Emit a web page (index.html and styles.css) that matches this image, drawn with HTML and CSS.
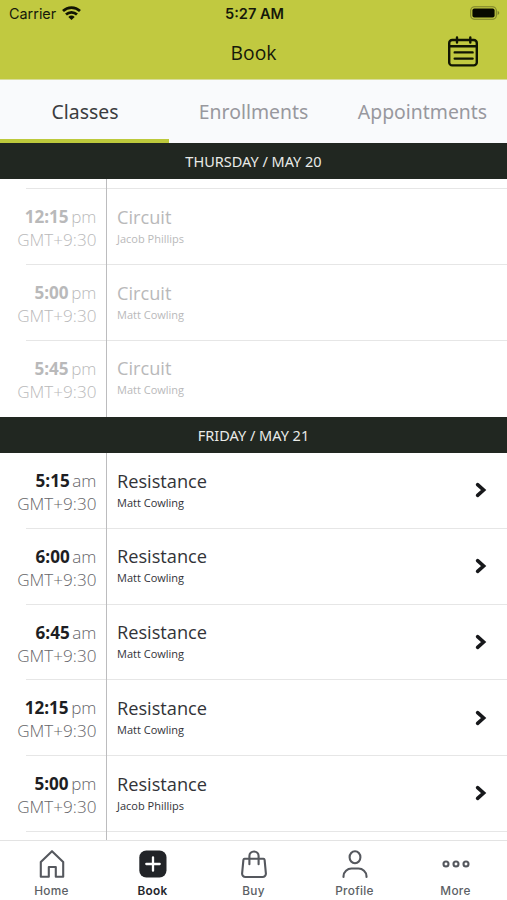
FILE: index.html
```html
<!DOCTYPE html>
<html lang="en">
<head>
<meta charset="utf-8">
<title>Book</title>
<link rel="stylesheet" href="styles.css">
</head>
<body>
<div class="app">
  <header class="top">
    <div class="status">
      <div class="carrier"><span>Carrier</span>
        <svg class="wifi" width="19" height="14" viewBox="0 0 19 14"><g fill="none" stroke="#111503" stroke-width="2.7"><path d="M1 5a12.3 12.3 0 0 1 17 0"/><path d="M4 8.6a8 8 0 0 1 11 0"/></g><path d="M6.3 11a4.7 4.7 0 0 1 6.4 0L9.5 14z" fill="#111503"/></svg>
      </div>
      <span class="clock">5:27 AM</span>
      <svg class="battery" width="30" height="14" viewBox="0 0 30 14"><rect x=".7" y=".7" width="25.6" height="12.6" rx="3.8" fill="none" stroke="#7b812a" stroke-width="1.1"/><rect x="2.4" y="2.4" width="22.2" height="9.2" rx="2" fill="#080a00"/><path d="M27.6 4.8q3.4 2.2 0 4.4z" fill="#7b812a"/></svg>
    </div>
    <div class="titlebar">
      <h1>Book</h1>
      <svg class="calendar" width="30" height="31" viewBox="0 0 30 31" fill="none" stroke="#111503" stroke-width="2.4" stroke-linecap="round"><rect x="1.2" y="4" width="27.6" height="25.4" rx="3"/><path d="M1.2 10.3h27.6M9 1.5v5M22.3 1.5v5"/><path d="M6.7 16.4h17.9M6.7 22.6h17.9"/></svg>
    </div>
  </header>
  <nav class="tabs">
    <a class="tab active">Classes</a>
    <a class="tab">Enrollments</a>
    <a class="tab">Appointments</a>
  </nav>
  <main class="schedule">
    <h2 class="day">THURSDAY / MAY 20</h2>
    <section class="rows past">
      <div class="row sliver"><div class="time"></div><div class="info"></div></div>
      <div class="row"><div class="time"><p><b>12:15</b><i>pm</i></p><p class="zone">GMT+9:30</p></div><div class="info"><h3>Circuit</h3><p>Jacob Phillips</p></div></div>
      <div class="row"><div class="time"><p><b>5:00</b><i>pm</i></p><p class="zone">GMT+9:30</p></div><div class="info"><h3>Circuit</h3><p>Matt Cowling</p></div></div>
      <div class="row"><div class="time"><p><b>5:45</b><i>pm</i></p><p class="zone">GMT+9:30</p></div><div class="info"><h3>Circuit</h3><p>Matt Cowling</p></div></div>
    </section>
    <h2 class="day">FRIDAY / MAY 21</h2>
    <section class="rows">
      <div class="row"><div class="time"><p><b>5:15</b><i>am</i></p><p class="zone">GMT+9:30</p></div><div class="info"><h3>Resistance</h3><p>Matt Cowling</p></div><svg class="chev" width="12" height="16" viewBox="0 0 12 16"><path d="M2.6 2.6L8.6 8l-6 5.4"/></svg></div>
      <div class="row"><div class="time"><p><b>6:00</b><i>am</i></p><p class="zone">GMT+9:30</p></div><div class="info"><h3>Resistance</h3><p>Matt Cowling</p></div><svg class="chev" width="12" height="16" viewBox="0 0 12 16"><path d="M2.6 2.6L8.6 8l-6 5.4"/></svg></div>
      <div class="row"><div class="time"><p><b>6:45</b><i>am</i></p><p class="zone">GMT+9:30</p></div><div class="info"><h3>Resistance</h3><p>Matt Cowling</p></div><svg class="chev" width="12" height="16" viewBox="0 0 12 16"><path d="M2.6 2.6L8.6 8l-6 5.4"/></svg></div>
      <div class="row"><div class="time"><p><b>12:15</b><i>pm</i></p><p class="zone">GMT+9:30</p></div><div class="info"><h3>Resistance</h3><p>Matt Cowling</p></div><svg class="chev" width="12" height="16" viewBox="0 0 12 16"><path d="M2.6 2.6L8.6 8l-6 5.4"/></svg></div>
      <div class="row"><div class="time"><p><b>5:00</b><i>pm</i></p><p class="zone">GMT+9:30</p></div><div class="info"><h3>Resistance</h3><p>Jacob Phillips</p></div><svg class="chev" width="12" height="16" viewBox="0 0 12 16"><path d="M2.6 2.6L8.6 8l-6 5.4"/></svg></div>
      <div class="row sliver"><div class="time"></div><div class="info"></div></div>
    </section>
  </main>
  <footer class="bottom">
    <a class="item"><svg width="30" height="30" viewBox="0 0 30 30"><path d="M3.8 13L15 2.2l11.2 10.8v14.8h-7.4v-9.8h-7v9.8h-8z"/></svg><span>Home</span></a>
    <a class="item on"><svg width="30" height="30" viewBox="0 0 30 30"><rect class="solid" x="1.3" y="1.5" width="27.2" height="27" rx="7"/><path class="plus" d="M15 8.3v13.4M8.3 15h13.4"/></svg><span>Book</span></a>
    <a class="item"><svg width="30" height="30" viewBox="0 0 30 30"><path d="M5.6 9.8h18.8a1.2 1.2 0 0 1 1.2 1l1.3 13.8a3.3 3.3 0 0 1-3.3 3.4H6.4a3.3 3.3 0 0 1-3.3-3.4l1.3-13.8a1.2 1.2 0 0 1 1.2-1z"/><path d="M10.4 15.3V7.1a4.6 4.6 0 0 1 9.2 0v8.2"/></svg><span>Buy</span></a>
    <a class="item"><svg width="30" height="30" viewBox="0 0 30 30"><ellipse cx="15" cy="8.3" rx="5.4" ry="6"/><path d="M3.5 28v-.8c0-4.5 4-7.7 8-7.7h7c4 0 8 3.2 8 7.7v.8"/></svg><span>Profile</span></a>
    <a class="item"><svg width="30" height="30" viewBox="0 0 30 30"><circle cx="5" cy="15" r="2.5"/><circle cx="15" cy="15" r="2.5"/><circle cx="25" cy="15" r="2.5"/></svg><span>More</span></a>
  </footer>
</div>
</body>
</html>
```
FILE: styles.css
```css
* { box-sizing: border-box; margin: 0; padding: 0; }
body { width: 507px; height: 900px; overflow: hidden; background: #fff; font-family: "Open Sans", "Noto Sans", sans-serif; color: #323338; }
.app { height: 900px; display: flex; flex-direction: column; }
.top { height: 79px; background: #c1c940; flex: none; color: #16190a; }
.status { height: 28px; display: grid; grid-template-columns: 1fr auto 1fr; align-items: center; padding: 0 7px 0 9px; font: 14.4px/28px Inter, sans-serif; }
.carrier { display: flex; align-items: center; gap: 6px; }
.wifi { margin-top: -2px; }
.clock { font-weight: 600; font-size: 14.6px; }
.battery { justify-self: end; margin-top: -2px; }
.titlebar { height: 51px; display: grid; grid-template-columns: 1fr auto 1fr; align-items: center; padding: 0 29px; }
h1 { grid-column: 2; font-size: 19.3px; line-height: 50px; height: 51px; font-weight: 400; }
.calendar { justify-self: end; margin-top: -4px; }
.tabs { height: 63.5px; flex: none; display: grid; grid-template-columns: repeat(3, 1fr); background: #f9fafc; border-top: 1px solid #d9dd9c; }
.tab { font: 19.4px/63px "Noto Sans", sans-serif; text-align: center; color: #98989e; border-bottom: 4px solid transparent; height: 62.5px; }
.tab.active { color: #3b3c40; border-color: #bdc93c; padding-left: 1px; }
.schedule { flex: 1; min-height: 0; overflow: hidden; }
.day { height: 36.5px; background: #212721; color: #e9ebe8; font: 400 14.5px/36px "Noto Sans", sans-serif; text-align: center; }
.rows { background: #fff; }
.row { height: 75.75px; display: flex; align-items: flex-start; background: linear-gradient(#bcbcbe, #bcbcbe) 106px 0 / 1px 100% no-repeat, linear-gradient(#e6e6e6, #e6e6e6) 26px 100% / 481px 1px no-repeat; }
.row.sliver { height: 10px; }
.past .row.sliver { height: 10.4px; }
.past .row:last-child { background: linear-gradient(#bcbcbe, #bcbcbe) 106px 0 / 1px 100% no-repeat; }
.time { width: 107px; padding: 16px 10.6px 0 0; text-align: right; font-size: 17.1px; line-height: 23px; white-space: nowrap; color: #656569; font-weight: 300; }
.time b { font-weight: 700; color: #1d1e23; margin-right: 2.5px; }
.time i { font-style: normal; }
.info { flex: 1; padding: 15.5px 0 0 10px; }
.info h3 { font-size: 18.2px; line-height: 25px; font-weight: 400; }
.info p { font-size: 11px; line-height: 18px; }
.past .time, .past .time b, .past .info { color: #b9b9ba; }
.chev { margin: 29.3px 20px 0 0; fill: none; stroke: #17181b; stroke-width: 3.6; stroke-linecap: round; stroke-linejoin: miter; }
.bottom { height: 60px; flex: none; display: grid; grid-template-columns: repeat(5, 1fr); border-top: 1px solid #e3e3e3; background: #fff; padding: 0 1px; }
.item { display: flex; flex-direction: column; align-items: center; padding-top: 7.5px; color: #5c5f65; font: 500 11.8px/15px Inter, sans-serif; letter-spacing: .3px; }
.item svg { fill: none; stroke: #55585e; stroke-width: 2.1; stroke-linecap: round; stroke-linejoin: round; }
.item span { margin-top: 5.5px; }
.item.on { color: #25272c; font-weight: 600; }
.item .solid { fill: #222428; stroke: none; }
.item .plus { stroke: #fff; stroke-width: 2.3; }
```
